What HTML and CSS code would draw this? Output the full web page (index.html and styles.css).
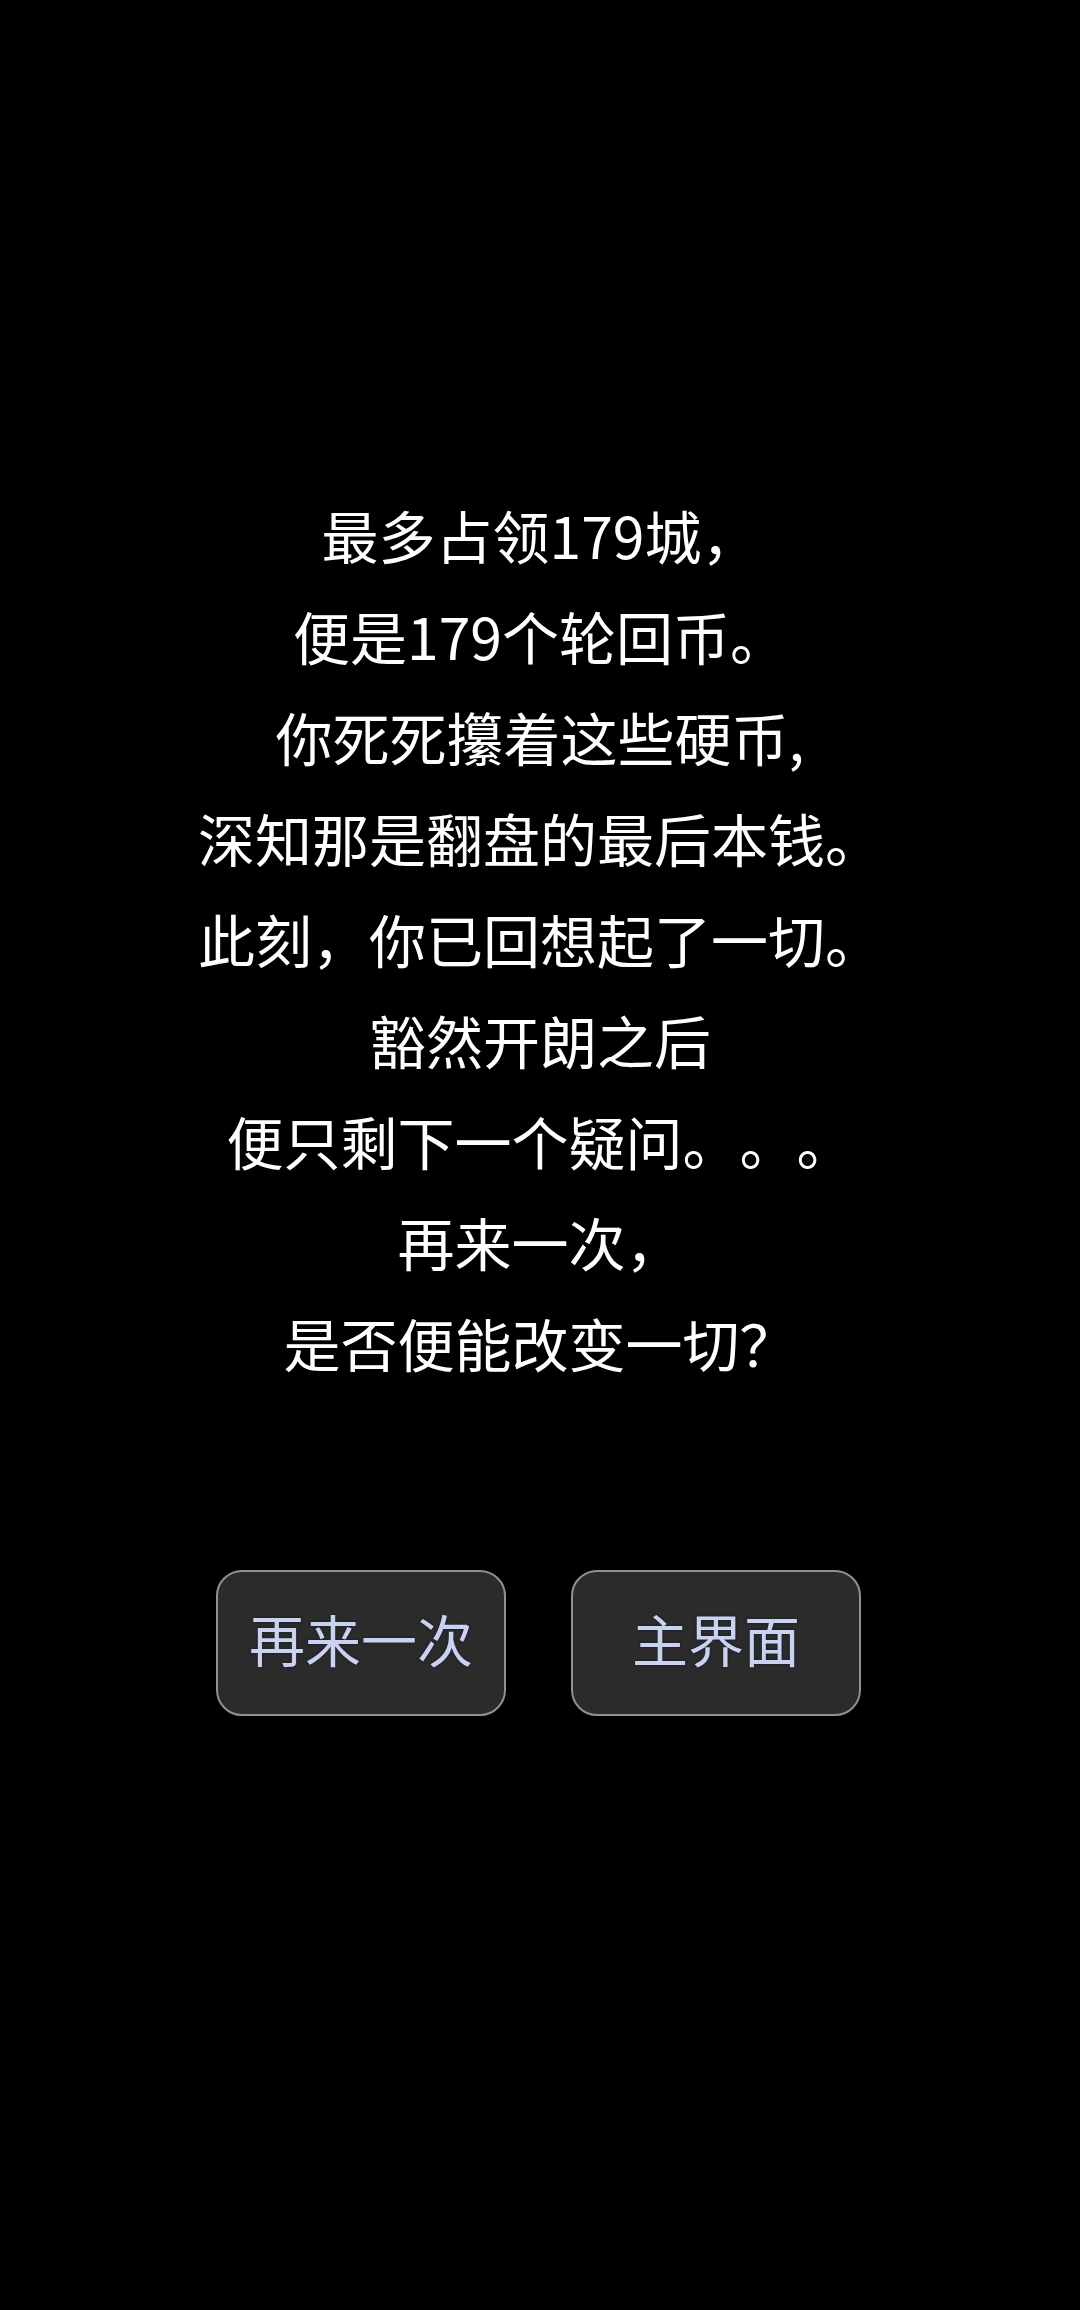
FILE: index.html
```html
<!DOCTYPE html>
<html lang="zh-CN">
<head>
<meta charset="utf-8">
<title>结局</title>
<link rel="stylesheet" href="styles.css">
</head>
<body>
  <div class="ending">
    <div class="story">
      <p>最多占领179城，</p>
      <p>便是179个轮回币。</p>
      <p>你死死攥着这些硬币,</p>
      <p>深知那是翻盘的最后本钱。</p>
      <p>此刻，你已回想起了一切。</p>
      <p>豁然开朗之后</p>
      <p>便只剩下一个疑问。。。</p>
      <p>再来一次，</p>
      <p>是否便能改变一切？</p>
    </div>
    <div class="actions">
      <button class="btn">再来一次</button>
      <button class="btn">主界面</button>
    </div>
  </div>
</body>
</html>
```

FILE: styles.css
```css
html, body
{
  margin: 0;
  padding: 0;
  background: #000;
}

.ending
{
  min-height: 2310px;
  display: flex;
  flex-direction: column;
  align-items: center;
  font-family: "Noto Sans CJK SC", "Noto Sans", sans-serif;
  color: #fff;
}

/* the epilogue lines, one per row */
.story
{
  padding-top: 484px;
  text-align: center;
  font-size: 57px;
  line-height: 101px;
  text-spacing-trim: space-all; /* keep 。。。 full width */
}

.story p
{
  margin: 0;
  white-space: nowrap;
}

.actions
{
  display: flex;
  gap: 65px;
  margin-top: 177px;
  margin-left: -3px;
}

.btn
{
  width: 290px;
  height: 146px;
  box-sizing: border-box;
  display: flex;
  align-items: center;
  justify-content: center;
  padding: 0 0 10px 0;
  background: #2b2b2b;
  border: 2px solid #919191;
  border-radius: 26px;
  font-family: inherit;
  font-size: 56px;
  line-height: 1;
  color: #c9d2ee;
  text-shadow: 0 0 2px #1a2030, 0 0 2px #1a2030;
}
```
